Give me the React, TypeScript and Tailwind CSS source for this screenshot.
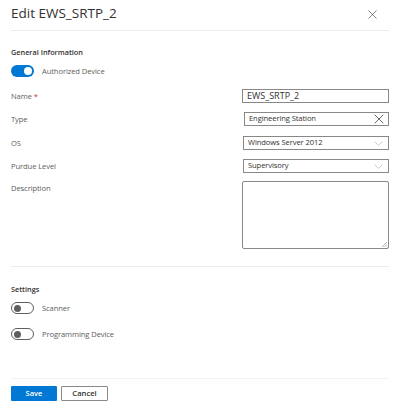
import { X } from "lucide-react";

const Toggle = ({ on }: { on: boolean }) =>
  on ? (
    <div className="flex h-[12px] w-[23px] items-center justify-end rounded-full bg-[#0078d4] pr-[2px]">
      <div className="h-[8px] w-[8px] rounded-full bg-white" />
    </div>
  ) : (
    <div className="flex h-[12px] w-[23px] items-center rounded-full border border-[#605e5c] bg-white pl-[2px]">
      <div className="h-[7px] w-[7px] rounded-full bg-[#605e5c]" />
    </div>
  );

const Chevron = () => (
  <svg width="9" height="5" viewBox="0 0 9 5" className="mr-[1px]">
    <polyline points="0.5,0.5 4.5,4.5 8.5,0.5" fill="none" stroke="#c0bebc" strokeWidth="0.8" />
  </svg>
);

const Label = ({ children }: { children: React.ReactNode }) => (
  <div className="text-[7.6px] leading-[12px] tracking-[-0.1px] text-[#605e5c]">{children}</div>
);

const App = () => {
  return (
    <div
      className="h-[414px] w-[400px] bg-white px-[11px] text-[#323130]"
      style={{ fontFamily: '"Open Sans", "Noto Sans", sans-serif' }}
    >
      {/* Header */}
      <div className="flex h-[31px] items-center justify-between border-b border-[#ebebeb] pb-[2px]">
        <h1 className="text-[13.5px] leading-none text-[#323130]">Edit EWS_SRTP_2</h1>
        <X className="mr-[9px] h-[15px] w-[15px] text-[#605e5c]" strokeWidth={1.2} />
      </div>

      {/* General Information */}
      <div className="mt-[15px] text-[7.3px] font-semibold leading-[12px] text-[#323130]">General Information</div>
      <div className="mt-[7px] flex items-center gap-[8px]">
        <Toggle on />
        <span className="text-[7.6px] leading-[12px] tracking-[-0.1px] text-[#605e5c]">Authorized Device</span>
      </div>

      <div className="mt-[12px] flex flex-col">
        <div className="flex h-[14px] items-center justify-between">
          <Label>
            Name <span className="text-[#d13438]">*</span>
          </Label>
          <div className="flex h-[14px] w-[147px] items-center border border-[#8a8886] px-[4px] text-[9px] text-[#323130]">
            EWS_SRTP_2
          </div>
        </div>

        <div className="mt-[9px] flex h-[14px] items-center justify-between">
          <Label>Type</Label>
          <div className="flex h-[14px] w-[145px] items-center justify-between border border-[#8a8886] pl-[4px] pr-[1px] text-[7.6px] tracking-[-0.1px] text-[#323130]">
            <span>Engineering Station</span>
            <X className="h-[16px] w-[16px] text-[#323130]" strokeWidth={1.1} />
          </div>
        </div>

        <div className="mt-[10px] flex h-[14px] items-center justify-between">
          <Label>OS</Label>
          <div className="flex h-[14px] w-[146px] items-center justify-between border border-[#8a8886] px-[4px] text-[7.6px] tracking-[-0.1px] text-[#323130]">
            <span>Windows Server 2012</span>
            <Chevron />
          </div>
        </div>

        <div className="mt-[9px] flex h-[14px] items-center justify-between">
          <Label>Purdue Level</Label>
          <div className="flex h-[14px] w-[146px] items-center justify-between border border-[#8a8886] px-[4px] text-[7.6px] tracking-[-0.1px] text-[#323130]">
            <span>Supervisory</span>
            <Chevron />
          </div>
        </div>

        <div className="mt-[8px] flex items-start justify-between">
          <div className="mt-[1px]">
            <Label>Description</Label>
          </div>
          <div className="relative h-[68px] w-[147px] rounded-[2px] border border-[#8a8886]">
            <svg className="absolute bottom-[1px] right-[1px]" width="6" height="6" viewBox="0 0 6 6">
              <line x1="1" y1="6" x2="6" y2="1" stroke="#a19f9d" strokeWidth="0.8" />
              <line x1="3.5" y1="6" x2="6" y2="3.5" stroke="#a19f9d" strokeWidth="0.8" />
            </svg>
          </div>
        </div>
      </div>

      <div className="mt-[17px] border-t border-[#ebebeb]" />

      {/* Settings */}
      <div className="mt-[16px] text-[7.3px] font-semibold leading-[12px] text-[#323130]">Settings</div>
      <div className="mt-[7px] flex items-center gap-[8px]">
        <Toggle on={false} />
        <span className="text-[7.6px] leading-[12px] tracking-[-0.1px] text-[#605e5c]">Scanner</span>
      </div>
      <div className="mt-[14px] flex items-center gap-[8px]">
        <Toggle on={false} />
        <span className="text-[7.6px] leading-[12px] tracking-[-0.1px] text-[#605e5c]">Programming Device</span>
      </div>

      <div className="mt-[38px] border-t border-[#f3f2f1]" />

      <div className="mt-[7px] flex gap-[4px]">
        <button className="h-[15px] w-[46px] rounded-[1px] bg-[#0078d4] text-[7.6px] font-semibold leading-none text-white">
          Save
        </button>
        <button className="h-[15px] w-[47px] rounded-[1px] border border-[#8a8886] bg-white text-[7.6px] font-semibold leading-none text-[#323130]">
          Cancel
        </button>
      </div>
    </div>
  );
};

export default App;
